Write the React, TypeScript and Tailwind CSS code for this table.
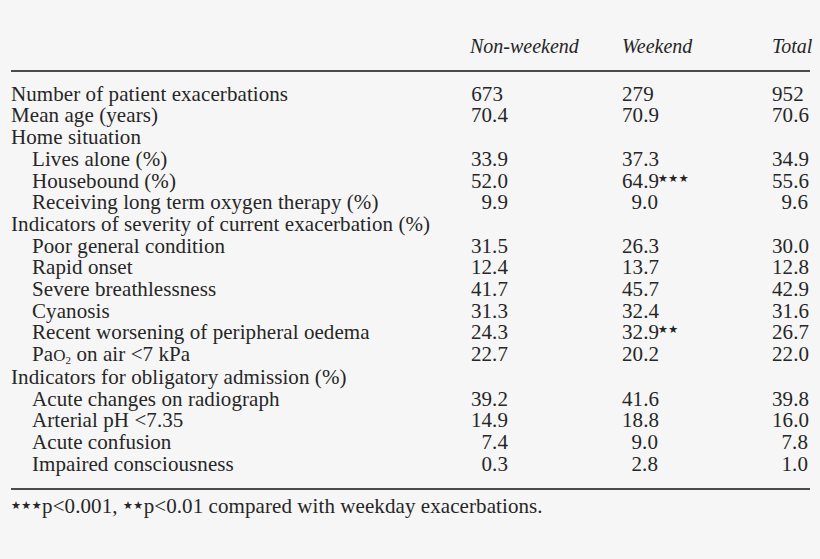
import React from "react";

type Row = {
  label: React.ReactNode;
  indent?: boolean;
  values?: [string, string, string];
  stars?: [string, string, string];
  lead?: boolean;
};

const rows: Row[] = [
  { label: "Number of patient exacerbations", values: ["673", "279", "952"], lead: true },
  { label: "Mean age (years)", values: ["70.4", "70.9", "70.6"] },
  { label: "Home situation" },
  { label: "Lives alone (%)", indent: true, values: ["33.9", "37.3", "34.9"] },
  { label: "Housebound (%)", indent: true, values: ["52.0", "64.9", "55.6"], stars: ["", "★★★", ""] },
  { label: "Receiving long term oxygen therapy (%)", indent: true, values: ["9.9", "9.0", "9.6"] },
  { label: "Indicators of severity of current exacerbation (%)" },
  { label: "Poor general condition", indent: true, values: ["31.5", "26.3", "30.0"] },
  { label: "Rapid onset", indent: true, values: ["12.4", "13.7", "12.8"] },
  { label: "Severe breathlessness", indent: true, values: ["41.7", "45.7", "42.9"] },
  { label: "Cyanosis", indent: true, values: ["31.3", "32.4", "31.6"] },
  { label: "Recent worsening of peripheral oedema", indent: true, values: ["24.3", "32.9", "26.7"], stars: ["", "★★", ""] },
  {
    label: (
      <>
        Pa<span className="text-[17px]">O</span>
        <span className="relative top-[3px] text-[11px] leading-none">2</span> on air &lt;7 kPa
      </>
    ),
    indent: true,
    values: ["22.7", "20.2", "22.0"],
  },
  { label: "Indicators for obligatory admission (%)" },
  { label: "Acute changes on radiograph", indent: true, values: ["39.2", "41.6", "39.8"] },
  { label: "Arterial pH <7.35", indent: true, values: ["14.9", "18.8", "16.0"] },
  { label: "Acute confusion", indent: true, values: ["7.4", "9.0", "7.8"] },
  { label: "Impaired consciousness", indent: true, values: ["0.3", "2.8", "1.0"] },
];

const numWidths = ["w-[38px]", "w-[36px]", "w-[36px]"];

function Stars({ s }: { s: string }) {
  return (
    <span className="absolute left-full top-[-3px] text-[11px] tracking-[0.5px] font-['DejaVu_Sans',sans-serif]">
      {s}
    </span>
  );
}

export default function App() {
  return (
    <div className="min-h-[559px] w-[820px] bg-[#f6f6f6] text-[#262626] font-['Liberation_Serif',serif] text-[21px] leading-[21.7px] tracking-[0.08px] pl-[11px] pr-[10px] pt-[36px]">
      <div className="grid grid-cols-[459px_152px_150px_1fr] italic text-[20px] tracking-normal">
        <div />
        <div>Non-weekend</div>
        <div>Weekend</div>
        <div>Total</div>
      </div>
      <div className="mt-[12px] h-[2px] bg-[#4a4a4a]" />
      <div className="mt-[12px]">
        {rows.map((r, i) => (
          <div key={i} className="grid grid-cols-[459px_152px_150px_1fr] whitespace-nowrap">
            <div className={r.indent ? "pl-[21px]" : ""}>{r.label}</div>
            {r.values
              ? r.values.map((v, j) => (
                  <div key={j}>
                    <div className={`relative text-right ${numWidths[j]} ${r.lead ? "pr-[5px]" : ""}`}>
                      {v}
                      {r.stars && r.stars[j] ? <Stars s={r.stars[j]} /> : null}
                    </div>
                  </div>
                ))
              : null}
          </div>
        ))}
      </div>
      <div className="mt-[13px] h-[2px] bg-[#4a4a4a]" />
      <div className="mt-[6px] whitespace-nowrap">
        <span className="relative top-[-4px] text-[11px] tracking-[0.5px] font-['DejaVu_Sans',sans-serif]">★★★</span>
        p&lt;0.001,{" "}
        <span className="relative top-[-4px] text-[11px] tracking-[0.5px] font-['DejaVu_Sans',sans-serif]">★★</span>
        p&lt;0.01 compared with weekday exacerbations.
      </div>
    </div>
  );
}
